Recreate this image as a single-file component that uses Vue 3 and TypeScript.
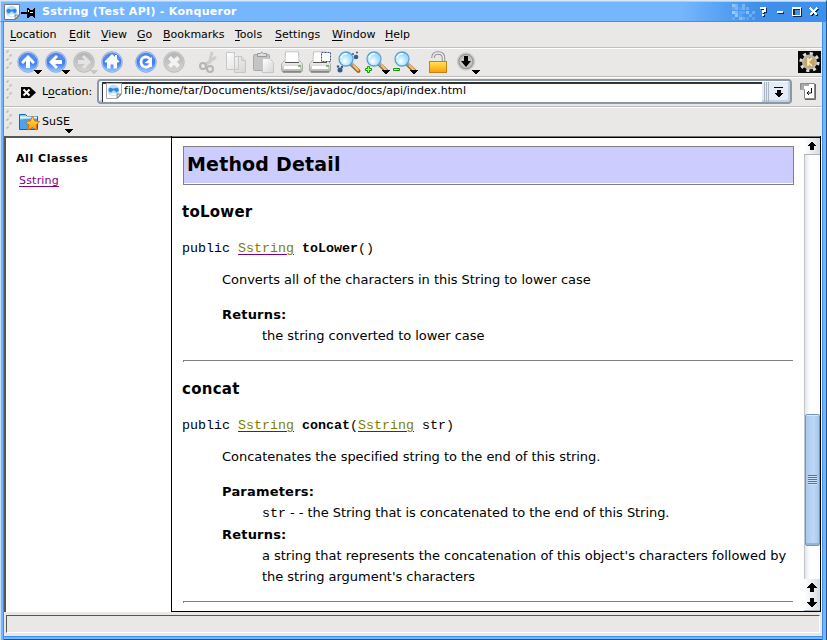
<script setup lang="ts">
interface MenuItem { label: string; width: number }
const menus: MenuItem[] = [
  { label: 'Location', width: 59 },
  { label: 'Edit', width: 32 },
  { label: 'View', width: 36 },
  { label: 'Go', width: 26 },
  { label: 'Bookmarks', width: 72 },
  { label: 'Tools', width: 40 },
  { label: 'Settings', width: 57 },
  { label: 'Window', width: 53 },
  { label: 'Help', width: 40 },
]
// column, row and opacity of each decorative title bar square
const dots: [number, number, number][] = [
  [0, 0, .55], [1, 0, .35], [3, 0, .4], [0, 1, .2], [1, 1, .4], [2, 1, .15], [3, 1, .35], [4, 1, .3],
  [0, 2, .7], [1, 2, .4], [2, 2, .2], [3, 2, .2], [4, 2, .55], [6, 2, .35], [1, 3, .6], [2, 3, .15], [5, 3, .3],
  [0, 4, .2], [2, 4, .45], [3, 4, .3], [4, 4, .2], [6, 4, .2],
]
</script>

<template>
  <div class="window">
    <header class="titlebar">
      <svg class="app-icon" width="16" height="16" viewBox="0 0 16 16">
        <path d="M.5.5h15v11l-4 4H.5z" fill="#fff" stroke="#777" />
        <circle cx="7.5" cy="7.5" r="5.8" fill="#b9dcfb" />
        <path d="M2.500 6q2-2 4-.5h2q3-1.500 4 .5v2l-2 1.500-2-2H7l-2 2-2-1z" fill="#2a86e8" />
        <path d="M4 11q3.500 3 7 0l-3.500-1z" fill="#fff" />
        <path d="M11 15v-4h4z" fill="#ddd" stroke="#666" stroke-width=".7" />
      </svg>
      <svg class="pin" width="14" height="10" viewBox="0 0 14 10" shape-rendering="crispEdges">
        <path d="M0 4h6v2H0zM6 0h2v1h1v1h3V1h1V0h1v10h-1V9h-1V8H9v1H8v1H6z" fill="#000" />
        <path d="M9 4h3v1H9zM7 2h1v2H7z" fill="#fff" />
      </svg>
      <h1>Sstring (Test API) - Konqueror</h1>
      <svg class="dots" width="28" height="20" viewBox="0 0 28 20" shape-rendering="crispEdges">
        <rect v-for="(d, i) in dots" :key="i" :x="d[0] * 3.4" :y="d[1] * 3.3 + 3" width="3" height="3" fill="#c8e3ff" :opacity="d[2]" />
      </svg>
      <svg class="controls" width="60" height="14" viewBox="0 0 60 14" shape-rendering="crispEdges">
        <g fill="none" stroke="#10284a" stroke-width="2" transform="translate(1 1)">
          <path d="M2 4V3h4v3H4v2M4 9v2M18 7h6M34 3h7v7h-7z" />
          <path d="M51 3l7 7M58 3l-7 7" />
        </g>
        <g fill="none" stroke="#fff" stroke-width="2">
          <path d="M2 4V3h4v3H4v2M4 9v2M18 7h6" />
          <path d="M33 2h9v9h-9zM34 4v6h7V4z" fill="#fff" fill-rule="evenodd" stroke="none" />
          <path d="M51 3l7 7M58 3l-7 7" />
        </g>
      </svg>
    </header>

    <nav class="menubar">
      <span v-for="m in menus" :key="m.label" :style="{ width: m.width + 'px' }"><u>{{ m.label[0] }}</u>{{ m.label.slice(1) }}</span>
    </nav>

    <div class="bar tools">
      <svg class="toolicons" width="486" height="28" viewBox="4 48 486 28">
        <defs>
          <linearGradient id="page" x1="0" y1="0" x2="1" y2="1"><stop stop-color="#fff" /><stop offset="1" stop-color="#d5d5d5" /></linearGradient>
          <linearGradient id="ball" x1="0" y1="0" x2="0" y2="1"><stop stop-color="#3a72e4" /><stop offset=".6" stop-color="#4684f2" /><stop offset="1" stop-color="#8fc4ff" /></linearGradient>
          <linearGradient id="off" x1="0" y1="0" x2="0" y2="1"><stop stop-color="#b4b4b4" /><stop offset="1" stop-color="#d2d2d2" /></linearGradient>
          <linearGradient id="gold" x1="0" y1="0" x2="0" y2="1"><stop stop-color="#ffe75c" /><stop offset="1" stop-color="#ff9c05" /></linearGradient>
          <linearGradient id="body" x1="0" y1="0" x2="0" y2="1"><stop stop-color="#fafafa" /><stop offset="1" stop-color="#b0b0b0" /></linearGradient>
          <radialGradient id="lens" cx=".4" cy=".65"><stop stop-color="#fff" /><stop offset="1" stop-color="#9adcff" /></radialGradient>
          <g id="disc"><circle r="10.3" fill="#b4cdf5" stroke="#7d9fd8" stroke-width=".8" /><circle r="9.300" fill="url(#ball)" /><path d="M-8-2a8 8 0 0 1 16 0Q0-4-8-2z" fill="#fff" opacity=".12" /></g>
          <g id="grey"><circle r="10.3" fill="#d0d0d0" stroke="#b4b4b4" stroke-width=".8" /><circle r="9.300" fill="url(#off)" /></g>
          <path id="arrow" d="M0-7l7 7-2 2-3-3v7h-4v-7l-3 3-2-2z" />
          <path id="drop" d="M0 0h8v1H7v1H6v1H5v1H3V3H2V2H1V1H0z" shape-rendering="crispEdges" />
          <g id="printer">
            <path d="M-6.500-10H6.500L7 1H-7z" fill="#fff" stroke="#bbb" />
            <path d="M-8-1h16l2.500 3v6q0 2-2 2h-17q-2 0-2-2V2z" fill="url(#body)" stroke="#999" stroke-width=".7" />
            <path d="M-6-9.500H6L6.500 0h-13z" fill="#fdfdfd" /><path d="M-7 .5H7" stroke="#555" />
            <path d="M-8 5.500H8" stroke="#fff" stroke-width="3" />
            <path d="M-9 10H9" stroke="#666" /><path d="M6 4h3" stroke="#62a748" stroke-width="1.500" />
          </g>
          <g id="glass">
            <path d="M5 5l7.500 7" stroke="#9c6b2e" stroke-width="4" stroke-linecap="round" />
            <path d="M6 5l6 6" stroke="#ffc46a" stroke-width="2" stroke-linecap="round" />
            <path d="M4 4l3 3" stroke="#999" stroke-width="2" />
            <circle r="7" fill="url(#lens)" stroke="#5ea2cf" stroke-width="1.300" /><path d="M-5-1q2-5 6-4" fill="none" stroke="#fff" stroke-width="1.500" />
          </g>
        </defs>
        <path v-for="n in 5" :key="n" :d="`M${n % 2 ? 7 : 10} ${49 + n * 4}v-2h2`" fill="none" stroke="#b3b1ae" />
        <g fill="#fff">
          <use href="#disc" x="28" y="62" /><use href="#arrow" x="28" y="62" />
          <use href="#disc" x="56" y="62" /><use href="#arrow" transform="translate(56 62) rotate(-90)" />
          <use href="#grey" x="84" y="62" /><use href="#arrow" transform="translate(84 62) rotate(90)" fill="#e4e4e4" />
          <use href="#disc" x="112" y="62" /><path d="M112 54l7.500 7.500-1 1H117v6h-3.500v-4h-3v4H107v-6h-1.500l-1-1zM115 55h2v4h-2z" />
          <use href="#disc" x="146" y="62" />
          <path d="M150 59q-2-2.500-5-2-4 1-4 5t4 5q4 .5 5.500-3" fill="none" stroke="#fff" stroke-width="2.800" /><path d="M144.500 63l7.500-6v10h-2.500v-3.500z" />
          <use href="#grey" x="174" y="62" /><path d="M169.500 57.500l9 9m0-9l-9 9" stroke="#f3f3f3" stroke-width="4" />
        </g>
        <use href="#drop" x="34" y="70" /><use href="#drop" x="62" y="70" /><use href="#drop" x="90" y="70" fill="#c8c8c8" />
        <g fill="none" stroke="#b5b5b5" stroke-width="2">
          <path d="M212 52l-3 12M216 57l-11 8" stroke="#cecece" stroke-width="3" /><circle cx="203" cy="66" r="3" /><circle cx="210" cy="69" r="3" />
        </g>
        <g fill="url(#page)" stroke="#c6c6c6">
          <path d="M226.500 52.500h8l4 4v13h-12zM234.500 56.500h7l4 4v12h-11z" /><path d="M234.500 52.500v4h4M241.500 56.500v4h4" />
          <rect x="253.500" y="54.500" width="16" height="16" rx="1" fill="#c4c4c4" stroke="#a9a9a9" /><path d="M257.500 56.500v-3h3q1-3 3 0h3v3z" fill="#ddd" stroke="#999" /><path d="M262.500 58.500h7l4 4v10h-11z" />
        </g>
        <use href="#printer" x="292" y="62" /><use href="#printer" x="320" y="62" />
        <rect x="321.500" y="52.500" width="9" height="9" fill="#fff" stroke="#3d4e85" stroke-dasharray="2 1" />
        <use href="#glass" x="346" y="59" /><use href="#glass" x="374" y="59" /><use href="#glass" x="402" y="59" />
        <g fill="#355992"><circle cx="356" cy="57" r="2.300" /><circle cx="357" cy="52.500" r="1" /><circle cx="353" cy="54" r="1" /><circle cx="340" cy="70" r="2.500" /><circle cx="338" cy="66.500" r="1.200" /><circle cx="342" cy="67" r="1.200" /></g>
        <path d="M367.500 66.500h2v2h2v2h-2v2h-2v-2h-2v-2h2zM393.500 68.500h6v2h-6z" fill="#b6ff72" stroke="#119c0c" />
        <use href="#drop" x="382" y="70" /><use href="#drop" x="410" y="70" />
        <path d="M433 58q0-5 5-5 5.500 0 5.500 5v4" fill="none" stroke="#8e8e94" stroke-width="3.500" /><path d="M433 58q0-5 5-5 5.500 0 5.500 5v4" fill="none" stroke="#eee" stroke-width="1.500" />
        <rect x="429.500" y="61.500" width="17" height="11" fill="url(#gold)" stroke="#bd831c" />
        <circle cx="466" cy="61.500" r="8.500" fill="#999" stroke="#ccc" stroke-width="1.500" /><circle cx="466" cy="61.500" r="6.500" fill="#c4c4c4" /><path d="M464 56h4v5h3l-5 6-5-6h3z" /><use href="#drop" x="472" y="70" />
      </svg>
      <svg class="gear" width="23" height="22" viewBox="0 0 22 22">
        <rect x="-1" width="24" height="22" fill="#080808" />
        <circle cx="11" cy="11" r="8.300" fill="none" stroke="#ddd" stroke-width="3.600" stroke-dasharray="3 3.519" /><circle cx="11" cy="11" r="7.500" fill="#b8b5b0" />
        <circle cx="11" cy="11" r="5.500" fill="#c9a25f" /><path d="M9.500 7v8M13.500 7l-4 4 4 4" fill="none" stroke="#fff1cc" stroke-width="1.600" />
      </svg>
    </div>

    <div class="bar location">
      <svg width="36" height="28" viewBox="4 78 36 28">
        <path v-for="n in 5" :key="n" :d="`M${n % 2 ? 7 : 10} ${79 + n * 4}v-2h2`" fill="none" stroke="#b3b1ae" />
        <path d="M21 87h9l6 5.500-6 5.500h-9z" fill="#000" /><path d="M23.500 89.500l6 6m0-6l-6 6" stroke="#fff" stroke-width="2" />
      </svg>
      <label>L<u>o</u>cation:</label>
      <div class="combo">
        <div class="field">
          <svg width="16" height="16" viewBox="0 0 16 16">
            <path d="M.5.5h15v11l-4 4H.5z" fill="#fff" stroke="#aaa" />
            <circle cx="7.500" cy="7.500" r="5.800" fill="#b9dcfb" />
            <path d="M2.500 6q2-2 4-.5h2q3-1.500 4 .5v2l-2 1.500-2-2H7l-2 2-2-1z" fill="#2a86e8" />
            <path d="M4 11q3.500 3 7 0l-3.500-1z" fill="#fff" />
            <path d="M11 15v-4h4z" fill="#ddd" stroke="#666" stroke-width=".7" />
          </svg>
          <span>file:/home/tar/Documents/ktsi/se/javadoc/docs/api/index.html</span>
        </div>
        <svg class="combo-button" width="28" height="20" viewBox="0 0 28 20" shape-rendering="crispEdges">
          <path d="M2.500 0v20M4.500 0v20M6.500 0v20" stroke="#a9b5c2" /><path d="M12 5h9v1h-9zM15 8h4v3h2v1h-1v1h-1v1h-1v1h-2v-1h-1v-1h-1v-1h-1v-1h2z" />
        </svg>
      </div>
      <svg class="go" width="16" height="18" viewBox="0 0 16 18">
        <path d="M4.500 1.500h10v15h-10v-9h-4v-6z" fill="#fff" stroke="#888" /><path d="M1 2h8v2H4v4H1z" fill="#aaa" /><path d="M15.500 2v15.500H5" fill="none" stroke="#666" /><path d="M11.500 6v5H7M9 9l-2 2 2 2" fill="none" stroke="#111" />
      </svg>
    </div>

    <div class="bar bookmarks">
      <svg width="38" height="27" viewBox="4 108 38 27">
        <path v-for="n in 5" :key="n" :d="`M${n % 2 ? 7 : 10} ${109 + n * 4}v-2h2`" fill="none" stroke="#b3b1ae" />
        <path d="M19.500 129.500v-15h6l2 2h10v13z" fill="#8ac7f6" stroke="#1761b5" /><path d="M20 120l8-2h9v11H20z" fill="#4da2ec" /><path d="M20 117.500h17" stroke="#e7f6ff" stroke-width="2" />
        <path d="M32.500 116l2.200 5 5 .5-3.700 3.500 1 5-4.500-2.500-4.500 2.500 1-5-3.700-3.500 5-.5z" fill="url(#gold)" stroke="#dd7009" />
      </svg>
      <span class="suse">SuSE<svg width="8" height="5" viewBox="0 0 8 5"><path d="M0 0h8v1H7v1H6v1H5v1H3V3H2V2H1V1H0z" shape-rendering="crispEdges" /></svg></span>
    </div>

    <main class="frames">
      <aside>
        <h2>All Classes</h2>
        <a class="visited">Sstring</a>
      </aside>
      <article>
        <div class="doc">
          <h2>Method Detail</h2>
          <h3>toLower</h3>
          <pre>public <a>Sstring</a> <b>toLower</b>()</pre>
          <dl>
            <dd class="desc">Converts all of the characters in this String to lower case</dd>
            <dt>Returns:</dt>
            <dd class="deep">the string converted to lower case</dd>
          </dl>
          <hr>
          <h3>concat</h3>
          <pre>public <a>Sstring</a> <b>concat</b>(<a>Sstring</a> str)</pre>
          <dl>
            <dd class="desc">Concatenates the specified string to the end of this string.</dd>
            <dt>Parameters:</dt>
            <dd class="deep param"><code>str</code> - - the String that is concatenated to the end of this String.</dd>
            <dt>Returns:</dt>
            <dd class="deep">a string that represents the concatenation of this object's characters followed by<br>the string argument's characters</dd>
          </dl>
          <hr>
        </div>
        <div class="scrollbar">
          <svg class="up" width="16" height="17" viewBox="0 0 16 17" shape-rendering="crispEdges"><path d="M7 4h2v1h1v1h1v1h1v1h1v1h-3v4H6V9H3V8h1V7h1V6h1V5h1z" /></svg>
          <div class="thumb"><i></i></div>
          <svg class="down" width="16" height="32" viewBox="0 0 16 32" shape-rendering="crispEdges"><path d="M7 4h2v1h1v1h1v1h1v1h1v1h-3v4H6V9H3V8h1V7h1V6h1V5h1zM5 16h7v1H5zM6 20h4v4h3v1h-1v1h-1v1h-1v1H9v1H7v-1H6v-1H5v-1H4v-1H3v-1h3z" /></svg>
        </div>
      </article>
    </main>

    <footer><div></div></footer>
  </div>
</template>

<style>
body { margin: 0; overflow: hidden; }
</style>

<style scoped>
* { box-sizing: border-box; }
.window { width: 827px; height: 640px; display: flex; flex-direction: column; padding: 0 5px 4px 4px; background: #e9e8e6; font: 11px "DejaVu Sans", sans-serif; color: #000; box-shadow: inset 1px 0 #c5e0fc, inset 3px 0 #76b5fc, inset 4px 0 #3f8fe8, inset -1px 0 #23558c, inset -4px 0 #76b5fc, inset -5px 0 #3f8fe8, inset 0 -1px #23558c, inset 0 -3px #76b5fc, inset 0 -4px #3f8fe8; }
.titlebar { height: 22px; margin: 0 -5px 0 -4px; padding-left: 4px; display: flex; flex: none; align-items: center; background: linear-gradient(90deg, #76b6ff 0 680px, #3f90eb 755px); border: solid; border-width: 1px; border-color: #d5e8fb #23558c #3f8fe8 #c5e0fc; box-shadow: inset 0 1px #a6cffb; }
.app-icon { margin: 1px 0 0 -1px; }
.pin { margin: 3px 0 0 1px; }
h1 { margin: 2px 0 0 7px; width: 690px; font-size: 11px; line-height: 20px; color: #fff; letter-spacing: .3px; white-space: nowrap; }
.dots { flex: none; }
.controls { flex: none; margin: 2px 4px 0 -1px; }
.menubar { height: 26px; flex: none; display: flex; padding: 0 0 0 6px; line-height: 25px; border-bottom: 1px solid #c1c0be; background: #e9e8e6; }
.menubar span { white-space: nowrap; }
u { text-underline-offset: 2px; text-decoration-thickness: 1px; }
.bar { display: flex; flex: none; border-bottom: 1px solid #bdbcba; border-top: 1px solid #fff; }
.tools { height: 29px; }
.toolicons { margin-top: -1px; }
.gear { margin: 2px 1px 0 auto; }
.location { height: 30px; }
label { width: 56px; line-height: 27px; margin-left: 2px; }
.combo { display: flex; width: 695px; height: 25px; margin-top: 1px; margin-left: -1px; padding: 1px 0 2px 3px; background: #e4edf7; border: 2px solid #8999a8; border-radius: 4px; box-shadow: inset 1px 1px #fff, inset -2px -2px #c4d1df; }
.field { width: 660px; height: 20px; display: flex; flex: none; background: #fff; border-top: 2px solid #333; border-left: 1px solid #333; }
.field svg { margin: -1px 2px 0 3px; }
.field span { line-height: 14px; white-space: nowrap; letter-spacing: .05px; }
.combo-button { flex: none; }
.go { margin: 4px 0 0 8px; }
.bookmarks { height: 29px; border-bottom: 0; }
.suse { line-height: 27px; display: flex; }
.suse svg { margin: 21px 0 0 -5px; }
.frames { display: flex; height: 476px; flex: none; background: #fff; }
aside { width: 167px; border-left: 2px solid #555; border-top: 2px solid #555; padding: 12px 0 0 10px; }
aside h2 { margin: 0 0 7px; font-size: 11px; line-height: 18px; letter-spacing: .55px; }
.visited { display: block; margin-left: 3px; line-height: 12px; color: #800080; text-decoration: underline; text-underline-offset: 2px; letter-spacing: .2px; }
article { width: 650px; display: flex; border: 1px solid #000; border-top: 0; background: #fff; box-shadow: inset 0 1px #777, inset 0 2px #000; padding-top: 2px; overflow: hidden; }
.doc { width: 632px; height: 473px; overflow: hidden; padding: 8px 10px 0; font-size: 13px; letter-spacing: -.03px; }
.doc h2 { width: 611px; height: 39px; margin: 0 0 17px 1px; padding-left: 3px; font-size: 19px; line-height: 35px; background: #ccf; border: 1px solid #808080; box-shadow: inset 0 -1px #fff; letter-spacing: .18px; }
.doc h3 { margin: 0; height: 20px; font-size: 15px; line-height: 20px; letter-spacing: .25px; }
pre { margin: 19px 0 0 -1px; height: 16px; font: 13.333px/16px "Liberation Mono", monospace; letter-spacing: 0; padding-left: 1px; }
pre a { color: #808000; text-decoration: underline #800080; text-underline-offset: 2px; }
code { font: 13.333px "Liberation Mono", monospace; letter-spacing: 0; }
dl { margin: 12px 0 0 40px; line-height: 21px; white-space: nowrap; }
dd { margin: 0; }
dt { font-weight: bold; letter-spacing: .2px; }
.desc { margin-bottom: 14px; }
.deep { margin-left: 40px; }
.param { height: 22px; letter-spacing: -.06px; }
hr { height: 2px; width: 610px; margin: 14px 0 17px 1px; border: solid #808080; border-width: 1px 0 0 1px; }
.scrollbar { width: 16px; flex: none; display: flex; flex-direction: column; border-left: 1px solid #bfc5ca; background: linear-gradient(90deg, #e4e7eb, #fff 5px); }
.up, .down { flex: none; background: linear-gradient(90deg, #fff, #d6dce3); border-bottom: 1px solid #aab4bf; margin-left: -1px; }
.thumb { flex: none; height: 132px; margin: 259px 0 33px; display: flex; align-items: center; justify-content: center; background: linear-gradient(90deg, #aac9f0, #bdd8f8 60%, #a2c4ec); border: 1px solid #7595bb; border-radius: 2px; box-shadow: inset 0 1px #d5e7fc, inset 0 -2px #92b4dc; }
.thumb i { width: 9px; height: 10px; background: repeating-linear-gradient(#567593 0 1px, #cae2fb 1px 2px); }
footer { padding: 3px 2px; height: 24px; }
footer div { height: 18px; border: 1px solid #555; border-right-color: #fff; border-bottom-color: #fff; }
</style>
